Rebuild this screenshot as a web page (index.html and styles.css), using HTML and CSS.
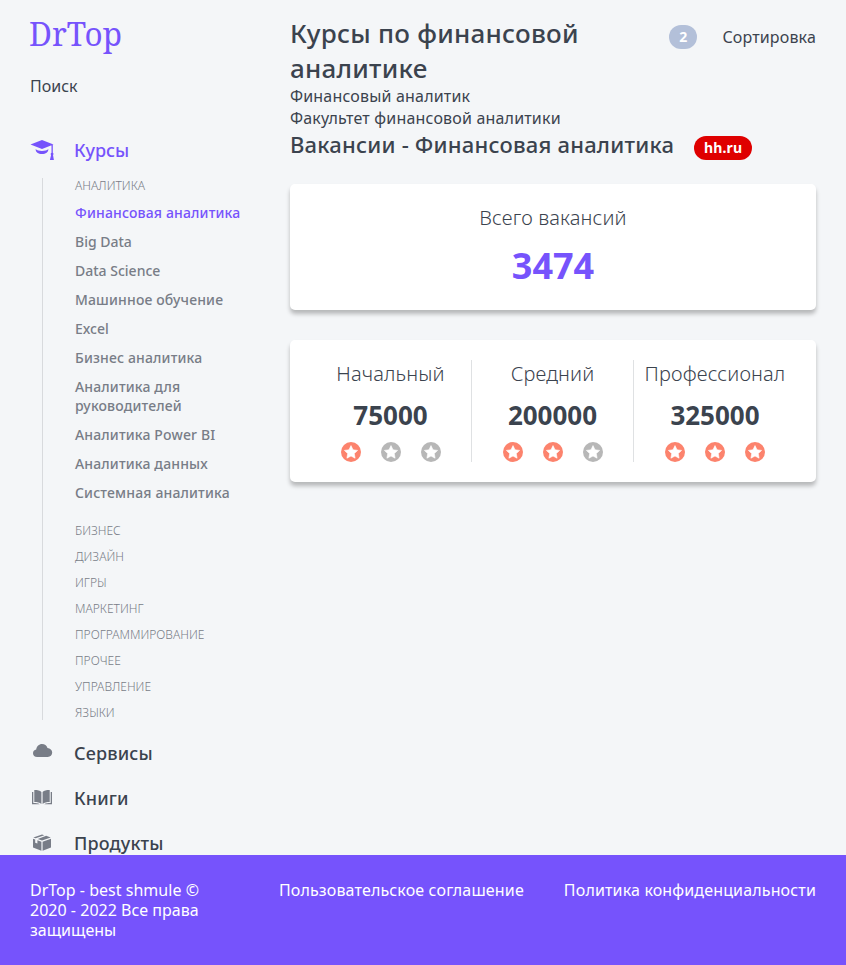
FILE: index.html
```html
<!DOCTYPE html>
<html lang="ru">
<head>
<meta charset="utf-8">
<title>DrTop</title>
<link rel="stylesheet" href="styles.css">
</head>
<body>
<svg class="defs" aria-hidden="true">
  <symbol id="star" viewBox="0 0 20 20"><circle cx="10" cy="10" r="10" fill="currentColor"/><path fill="#fff" stroke="#fff" stroke-width=".6" stroke-linejoin="round" d="M10 3.600 12 7.800l4.600.600-3.300 3.200.8 4.600L10 14l-4.100 2.200.8-4.600-3.300-3.200L8 7.800z"/></symbol>
</svg>
<div class="page">
  <aside class="sidebar">
    <a class="logo"><svg width="94" height="44" viewBox="0 0 94 44"><text x="-1" y="29.500" textLength="93" lengthAdjust="spacingAndGlyphs">DrTop</text></svg></a>
    <div class="search">Поиск</div>
    <nav>
      <div class="menu menu-active">
        <svg class="icon" width="24" height="22" viewBox="0 0 24 22"><path fill="currentColor" d="M.5 6.500 12 2l11.500 4.500L12 11zM21.500 6.500h1.300v8.300c.9.600.9 1.700.2 2.300l.9 4.900h-4l1.200-4.900c-.7-.8-.5-1.700.4-2.300zM5.700 11c1.300 1.500 3.500 1.900 6.300 1.900s5-.4 6.300-1.900c.2 3.200-2.600 5-6.300 5s-6.500-1.800-6.300-5z"/></svg>
        <span>Курсы</span>
      </div>
      <div class="tree">
        <div class="category">Аналитика</div>
        <ul class="items">
          <li class="current">Финансовая аналитика</li><li class="latin">Big Data</li><li class="latin">Data Science</li><li>Машинное обучение</li><li class="latin">Excel</li><li>Бизнес аналитика</li><li>Аналитика для руководителей</li><li>Аналитика Power BI</li><li>Аналитика данных</li><li>Системная аналитика</li>
        </ul>
        <div class="category">Бизнес</div>
        <div class="category">Дизайн</div>
        <div class="category">Игры</div>
        <div class="category">Маркетинг</div>
        <div class="category">Программирование</div>
        <div class="category">Прочее</div>
        <div class="category">Управление</div>
        <div class="category">Языки</div>
      </div>
      <div class="menu">
        <svg class="icon" width="24" height="22" viewBox="0 0 24 22"><path fill="currentColor" d="M7.200 16C4.600 16 3 14.300 3 12.200c0-2 1.300-3.400 3.200-3.700C6.700 5.300 9 3 12 3c2.700 0 4.700 1.600 5.500 4 2.600.200 4.700 2 4.700 4.600 0 2.500-1.900 4.400-4.400 4.400z"/></svg>
        <span>Сервисы</span>
      </div>
      <div class="menu">
        <svg class="icon" width="24" height="22" viewBox="0 0 24 22"><path fill="currentColor" d="M11.400 6C9.800 4.500 8 4 4.300 4v12c3.100 0 5.300.600 7.100 2zM12.600 6c1.600-1.500 3.400-2 7.100-2v12c-3.100 0-5.300.600-7.100 2zM2 6h1.300v11c2.600 0 4.700.2 6.400 1.200H2zM22 6h-1.300v11c-2.600 0-4.700.2-6.400 1.200H22z"/></svg>
        <span>Книги</span>
      </div>
      <div class="menu">
        <svg class="icon" width="24" height="22" viewBox="0 0 24 22"><path fill="currentColor" d="m3.300 6.400 8.700-3 2.300.8-8.600 3.100zM16.200 4.800l4.500 1.600-8.700 3.200-4.200-1.500zM3 7.700l2.200.8v3.300l2.200.8V9.300l4 1.500v8.900L3 16.500zM21 7.700v8.800l-8.400 3.200v-8.900z"/></svg>
        <span>Продукты</span>
      </div>
    </nav>
  </aside>
  <main>
    <header class="head">
      <h1>Курсы по финансовой аналитике</h1>
      <div class="sort"><span class="count">2</span><span>Сортировка</span></div>
    </header>
    <p>Финансовый аналитик</p>
    <p>Факультет финансовой аналитики</p>
    <div class="vacancies"><h2>Вакансии - Финансовая аналитика</h2><span class="hh">hh.ru</span></div>
    <section class="card total">
      <div class="label">Всего вакансий</div>
      <div class="total-value">3474</div>
    </section>
    <section class="card levels">
      <div class="level"><div class="label">Начальный</div><div class="salary">75000</div>
        <div class="stars"><svg class="on"><use href="#star"/></svg><svg><use href="#star"/></svg><svg><use href="#star"/></svg></div></div>
      <div class="level"><div class="label">Средний</div><div class="salary">200000</div>
        <div class="stars"><svg class="on"><use href="#star"/></svg><svg class="on"><use href="#star"/></svg><svg><use href="#star"/></svg></div></div>
      <div class="level"><div class="label">Профессионал</div><div class="salary">325000</div>
        <div class="stars"><svg class="on"><use href="#star"/></svg><svg class="on"><use href="#star"/></svg><svg class="on"><use href="#star"/></svg></div></div>
    </section>
  </main>
</div>
<footer>
  <div class="copyright">DrTop - best shmule © 2020 - 2022 Все права защищены</div>
  <a>Пользовательское соглашение</a>
  <a>Политика конфиденциальности</a>
</footer>
</body>
</html>
```
FILE: styles.css
```css
* { box-sizing: border-box; margin: 0; padding: 0; }
body {
  height: 965px;
  overflow: hidden;
  display: flex;
  flex-direction: column;
  background: #f4f6f8;
  color: #3b434e;
  font: 16px/22px "Noto Sans", sans-serif;
}
.defs { display: none; }
.page {
  height: 855px;
  flex: none;
  overflow: hidden;
  display: grid;
  grid-template-columns: 230px 526px;
  column-gap: 30px;
  padding: 0 30px;
}
.sidebar { padding-top: 16px; }
.logo, .logo svg { display: block; height: 44px; overflow: visible; }
.logo text { font: 32px "Noto Serif", "DejaVu Serif", serif; fill: #7653fc; }
.search { margin-top: 15px; height: 22px; }
.menu {
  display: flex;
  height: 25px;
  margin-bottom: 20px;
  color: #3b434e;
  font-size: 18px;
  font-weight: 500;
  line-height: 25px;
  letter-spacing: .15px;
}
.menu .icon { color: #787d87; margin-right: 20px; flex: none; }
.menu-active { margin-top: 41px; margin-bottom: 15px; letter-spacing: 0; }
.menu-active, .menu-active .icon { color: #7653fc; }
.tree {
  margin: 0 0 21px 12px;
  padding-left: 32px;
  border-left: 1px solid #d8dadd;
  color: #787d87;
}
.category {
  height: 16px;
  margin-bottom: 10px;
  font-size: 12px;
  font-weight: 300;
  line-height: 16px;
  text-transform: uppercase;
}
.category:first-child { margin-bottom: 9px; }
.category:last-child { height: 15px; margin-bottom: 0; }
.items {
  list-style: none;
  margin-bottom: 21px;
  font-size: 14px;
  font-weight: 500;
  line-height: 19px;
  letter-spacing: .15px;
}
.items li { margin-bottom: 10px; max-width: 170px; }
.items li:last-child { margin-bottom: 0; }
.items .current { color: #7653fc; }
.items .latin { letter-spacing: 0; }
main { padding-top: 16px; }
.head { display: flex; justify-content: space-between; }
h1 { width: 320px; font-size: 26px; font-weight: 500; line-height: 35px; letter-spacing: .24px; }
main p { letter-spacing: .18px; }
.head + p { margin-top: -1px; }
.sort { display: flex; align-items: center; height: 42px; gap: 25px; letter-spacing: .16px; }
.count, .hh {
  height: 24px;
  border-radius: 12px;
  color: #fff;
  font-size: 14px;
  font-weight: 700;
  line-height: 24px;
  padding: 0 10px;
}
.count { background: #b3c0d9; }
.vacancies { display: flex; gap: 20px; height: 31px; }
h2 { font-size: 22px; font-weight: 500; line-height: 30px; white-space: nowrap; letter-spacing: .21px; }
.hh { background: #df0000; margin-top: 7px; letter-spacing: .1px; }
.card {
  border-radius: 5px;
  background: #fff;
  box-shadow: 0 4px 4px rgba(0, 0, 0, .25);
  text-align: center;
}
.label { font-size: 20px; font-weight: 300; line-height: 27px; letter-spacing: .14px; }
.total { height: 126px; margin-top: 24px; padding-top: 20px; }
.total-value { margin-top: 10px; color: #7653fc; font-size: 36px; font-weight: 700; line-height: 49px; }
.levels {
  display: grid;
  grid-template-columns: repeat(3, 162px);
  justify-content: center;
  height: 142px;
  margin-top: 30px;
  padding: 20px 0;
}
.level:not(:last-child) { border-right: 1px solid #dfe1e3; }
.salary { margin-top: 11px; font-size: 26px; font-weight: 700; line-height: 35px; }
.stars { display: flex; justify-content: center; gap: 20px; margin-top: 9px; }
.stars svg { width: 20px; height: 20px; color: #b7b7b7; }
.stars .on { color: #fc836d; }
footer {
  display: grid;
  grid-template-columns: 1fr auto auto;
  column-gap: 40px;
  height: 110px;
  padding: 25px 30px;
  background: #7653fc;
  color: #fff;
  font-size: 16px;
  line-height: 20px;
}
footer a { letter-spacing: .15px; }
.copyright { max-width: 180px; letter-spacing: .02px; }
```
